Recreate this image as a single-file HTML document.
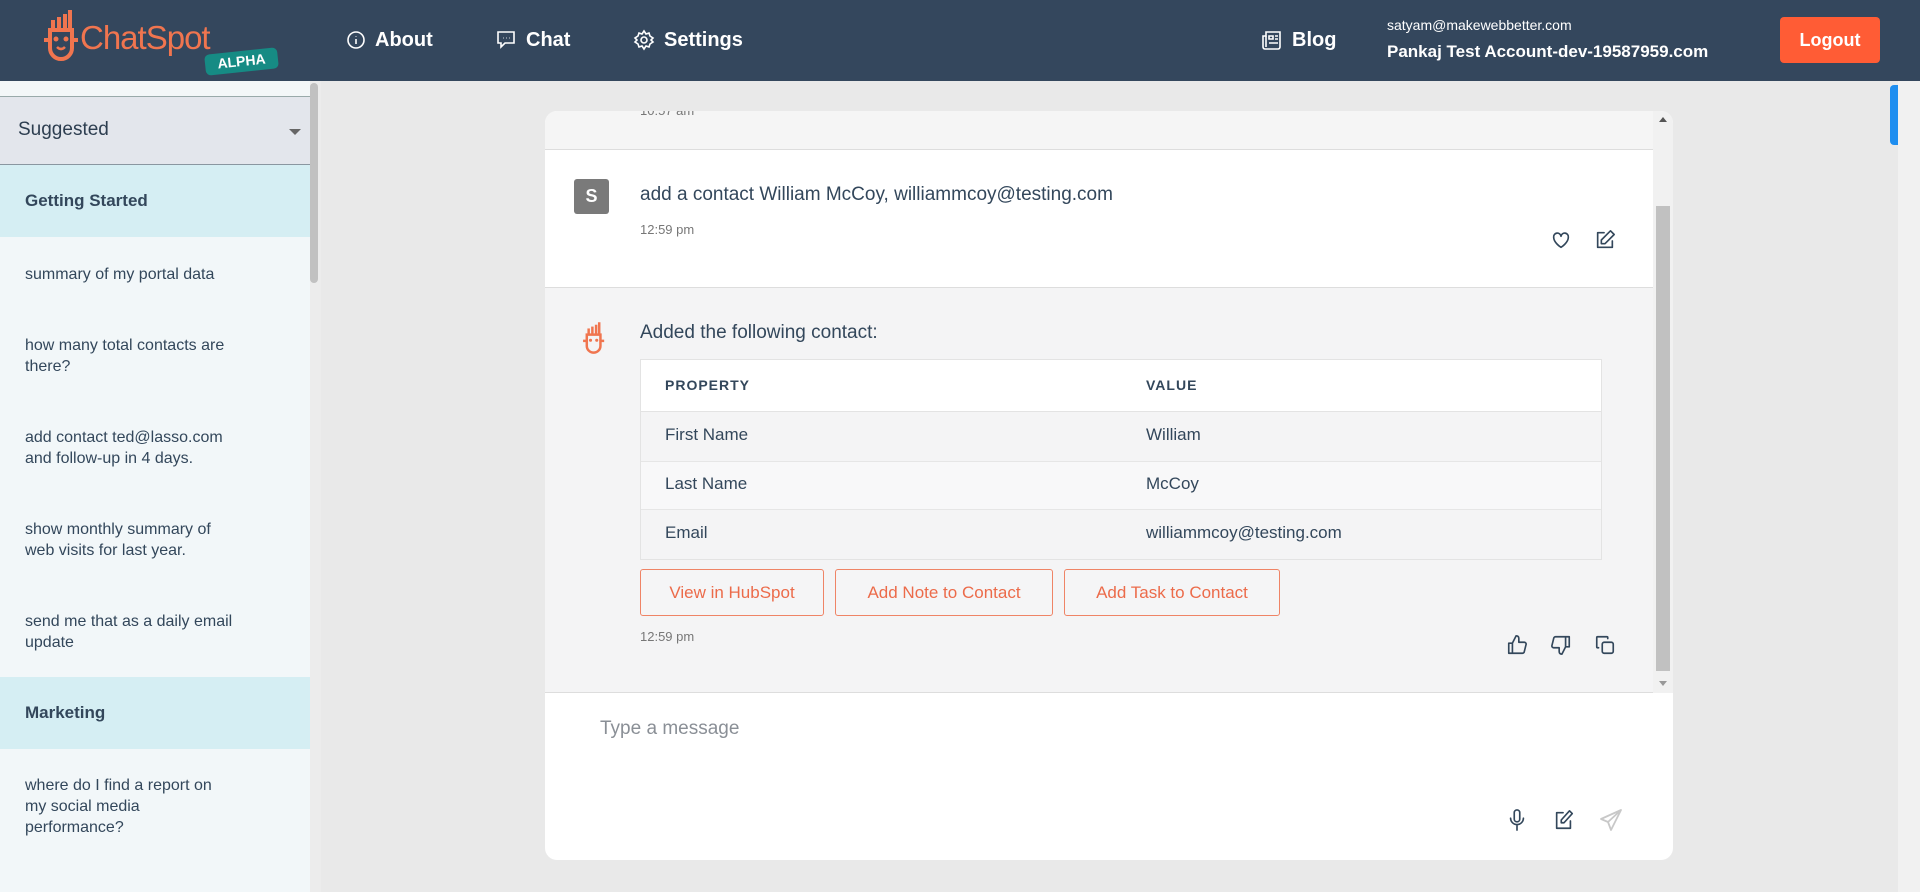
<!DOCTYPE html>
<html><head><meta charset="utf-8">
<style>
*{box-sizing:border-box;margin:0;padding:0}
body{width:1920px;height:892px;overflow:hidden;background:#e9e9e9;font-family:"Liberation Sans",sans-serif;color:#33475b;position:relative}
.hdr{position:absolute;left:0;top:0;width:1920px;height:81px;background:#34475d}
.abs{position:absolute}
.nav{position:absolute;top:27px;color:#fff;font-size:20px;font-weight:bold;display:flex;align-items:center;gap:9px;line-height:26px}
.side{position:absolute;left:0;top:81px;width:321px;height:811px;background:#f2f7f9;overflow:hidden}
.item{position:absolute;left:25px;font-size:16px;line-height:21px;color:#33475b;width:280px;white-space:nowrap}
.sec{position:absolute;left:0;width:310px;background:#d5eef3;font-weight:bold;font-size:17px;padding-left:25px;display:flex;align-items:center;color:#33475b}
.card{position:absolute;left:545px;top:111px;width:1128px;height:749px;background:#fff;border-radius:12px;overflow:hidden}
.cell{position:absolute;font-size:17px;color:#33475b}
.btn{position:absolute;top:569px;height:47px;border:1.5px solid #ef8466;border-radius:3px;color:#ec6b4a;font-size:17px;display:flex;align-items:center;justify-content:center;background:#f5f5f6}
svg.i{position:absolute;fill:none;stroke:#33475b;stroke-width:1.8;stroke-linecap:round;stroke-linejoin:round}
</style></head><body>
<div class="hdr">
  <svg class="abs" style="left:40px;top:8px" width="40" height="58" viewBox="0 0 40 58"><g fill="none" stroke="#f0754f" stroke-width="4"><path d="M10 22 h22 v18 a11 11 0 0 1 -22 0 z"/><path d="M4 32h6M32 32h6"/></g><g fill="#f0754f"><rect x="11" y="12" width="4" height="10"/><rect x="17" y="9" width="4" height="13"/><rect x="23" y="6" width="4" height="16"/><rect x="28" y="2" width="4" height="20"/><circle cx="16" cy="31" r="2.5"/><circle cx="26" cy="31" r="2.5"/></g><path d="M17 39 q4 4 8 0" stroke="#f0754f" stroke-width="2.5" fill="none"/></svg>
  <div class="abs" style="left:80px;top:19px;color:#f0754f;font-size:33px;letter-spacing:-1px">ChatSpot</div>
  <div class="abs" style="left:205px;top:51px;width:73px;height:21px;background:#168b84;border-radius:5px;transform:rotate(-6deg);color:#fff;font-weight:bold;font-size:14px;text-align:center;line-height:21px">ALPHA</div>
  <div class="nav" style="left:346px"><svg width="20" height="20" viewBox="0 0 20 20" fill="none" stroke="#fff" stroke-width="1.6"><circle cx="10" cy="10" r="8"/><path d="M10 9v5M10 6v.5"/></svg>About</div>
  <div class="nav" style="left:495px"><svg width="22" height="22" viewBox="0 0 22 22" fill="none" stroke="#fff" stroke-width="1.6"><path d="M3 3h16v11H10l-4 4v-4H3z"/><path d="M8 9h.5M11 9h.5M14 9h.5"/></svg>Chat</div>
  <div class="nav" style="left:633px"><svg width="22" height="22" viewBox="0 0 22 22" fill="none" stroke="#fff" stroke-width="1.6"><circle cx="11" cy="11" r="3"/><path d="M11 2l2 3 3-1 1 3 3 2-2 2 2 2-3 2-1 3-3-1-2 3-2-3-3 1-1-3-3-2 2-2-2-2 3-2 1-3 3 1z"/></svg>Settings</div>
  <div class="nav" style="left:1261px"><svg width="22" height="22" viewBox="0 0 22 22" fill="none" stroke="#fff" stroke-width="1.6"><path d="M5 3h14v15a2 2 0 0 1-2 2H4a2 2 0 0 1-2-2V7h3z"/><path d="M5 7v11M8 7h4v3H8zM14 7h3M14 10h3M8 14h9"/></svg>Blog</div>
  <div class="abs" style="left:1387px;top:17px;color:#fff;font-size:14px">satyam@makewebbetter.com</div>
  <div class="abs" style="left:1387px;top:42px;color:#fff;font-size:17px;font-weight:bold">Pankaj Test Account-dev-19587959.com</div>
  <div class="abs" style="left:1780px;top:17px;width:100px;height:46px;background:#ff5c35;border-radius:4px;color:#fff;font-size:18px;font-weight:bold;text-align:center;line-height:46px">Logout</div>
</div>

<div class="side">
  <div class="abs" style="left:0;top:0;width:310px;height:16px;background:#f3f7f8;border-bottom:1px solid #9aa"></div>
  <div class="abs" style="left:0;top:16px;width:310px;height:68px;background:#e3e6ec;border-bottom:1px solid #8a96a0"></div>
  <div class="abs" style="left:18px;top:38px;font-size:19px;color:#2d3e50">Suggested</div>
  <div class="abs" style="left:289px;top:48px;width:0;height:0;border-left:6px solid transparent;border-right:6px solid transparent;border-top:6px solid #666"></div>
  <div class="sec" style="top:84px;height:72px">Getting Started</div>
  <div class="item" style="top:183px">summary of my portal data</div>
  <div class="item" style="top:254px">how many total contacts are<br>there?</div>
  <div class="item" style="top:346px">add contact ted@lasso.com<br>and follow-up in 4 days.</div>
  <div class="item" style="top:438px">show monthly summary of<br>web visits for last year.</div>
  <div class="item" style="top:530px">send me that as a daily email<br>update</div>
  <div class="sec" style="top:596px;height:72px">Marketing</div>
  <div class="item" style="top:694px">where do I find a report on<br>my social media<br>performance?</div>
  <div class="abs" style="left:310px;top:0;width:11px;height:811px;background:#ececec"></div>
  <div class="abs" style="left:310px;top:2px;width:8px;height:200px;background:#c1c1c1;border-radius:4px"></div>
</div>

<div class="abs" style="left:1898px;top:81px;width:22px;height:811px;background:#f1f1f1"></div>
<div class="abs" style="left:1890px;top:85px;width:8px;height:60px;background:#1e8ef0;border-radius:4px 0 0 4px"></div>

<div class="card">
  <div class="abs" style="left:0;top:0;width:1108px;height:39px;background:#f5f5f5;border-bottom:1px solid #ddd"></div>
  <div class="abs" style="left:95px;top:-8px;font-size:13px;color:#777">10:57 am</div>
  <div class="abs" style="left:0;top:39px;width:1108px;height:138px;background:#fff;border-bottom:1px solid #ddd"></div>
  <div class="abs" style="left:29px;top:68px;width:35px;height:35px;background:#7a7a7a;border-radius:3px;color:#fff;font-weight:bold;font-size:18px;text-align:center;line-height:35px">S</div>
  <div class="abs" style="left:95px;top:73px;font-size:19px;color:#33475b">add a contact William McCoy, williammcoy@testing.com</div>
  <div class="abs" style="left:95px;top:111px;font-size:13px;color:#777">12:59 pm</div>
  <svg class="i" style="left:1005px;top:118px" width="22" height="22" viewBox="0 0 24 24"><path d="M12 20s-8-5-8-11a4 4 0 0 1 8-1 4 4 0 0 1 8 1c0 6-8 11-8 11z"/></svg>
  <svg class="i" style="left:1049px;top:118px" width="22" height="22" viewBox="0 0 24 24"><path d="M11 4H4v16h16v-7"/><path d="M18 2l4 4-10 10H8v-4z"/></svg>

  <div class="abs" style="left:0;top:177px;width:1108px;height:405px;background:#f4f4f5;border-bottom:1px solid #ddd"></div>
  <svg class="abs" style="left:35px;top:210px" width="26" height="36" viewBox="0 0 40 58"><g fill="none" stroke="#f0754f" stroke-width="4"><path d="M10 22 h22 v18 a11 11 0 0 1 -22 0 z"/><path d="M4 32h6M32 32h6"/></g><g fill="#f0754f"><rect x="11" y="12" width="4" height="10"/><rect x="17" y="9" width="4" height="13"/><rect x="23" y="6" width="4" height="16"/><rect x="28" y="2" width="4" height="20"/><circle cx="16" cy="31" r="2.5"/><circle cx="26" cy="31" r="2.5"/></g></svg>
  <div class="abs" style="left:95px;top:211px;font-size:19px;color:#33475b">Added the following contact:</div>
  <div class="abs" style="left:95px;top:248px;width:962px;height:201px;border:1px solid #e3e3e3;background:#f4f4f5"></div>
  <div class="abs" style="left:96px;top:249px;width:960px;height:52px;background:#fff;border-bottom:1px solid #e3e3e3"></div>
  <div class="cell" style="left:120px;top:266px;font-size:14px;font-weight:bold;letter-spacing:1px;color:#33475b">PROPERTY</div>
  <div class="cell" style="left:601px;top:266px;font-size:14px;font-weight:bold;letter-spacing:1px;color:#33475b">VALUE</div>
  <div class="abs" style="left:96px;top:350px;width:960px;height:49px;background:#f8f8f9;border-top:1px solid #e6e6e6;border-bottom:1px solid #e6e6e6"></div>
  <div class="cell" style="left:120px;top:314px">First Name</div><div class="cell" style="left:601px;top:314px">William</div>
  <div class="cell" style="left:120px;top:363px">Last Name</div><div class="cell" style="left:601px;top:363px">McCoy</div>
  <div class="cell" style="left:120px;top:412px">Email</div><div class="cell" style="left:601px;top:412px">williammcoy@testing.com</div>
  <div class="btn" style="left:95px;width:184px;top:458px">View in HubSpot</div>
  <div class="btn" style="left:290px;width:218px;top:458px">Add Note to Contact</div>
  <div class="btn" style="left:519px;width:216px;top:458px">Add Task to Contact</div>
  <div class="abs" style="left:95px;top:518px;font-size:13px;color:#777">12:59 pm</div>
  <svg class="i" style="left:961px;top:523px" width="22" height="22" viewBox="0 0 24 24"><path d="M7 10v11H3V10zM7 10l4-8c2 0 3 1 3 3v4h6a2 2 0 0 1 2 2l-2 8a2 2 0 0 1-2 2H7"/></svg>
  <svg class="i" style="left:1005px;top:523px" width="22" height="22" viewBox="0 0 24 24"><path d="M17 14V3h4v11zM17 14l-4 8c-2 0-3-1-3-3v-4H4a2 2 0 0 1-2-2l2-8a2 2 0 0 1 2-2h11"/></svg>
  <svg class="i" style="left:1049px;top:523px" width="22" height="22" viewBox="0 0 24 24"><rect x="9" y="9" width="12" height="12" rx="2"/><path d="M5 15H4a1 1 0 0 1-1-1V4a1 1 0 0 1 1-1h10a1 1 0 0 1 1 1v1"/></svg>

  <div class="abs" style="left:1108px;top:0;width:20px;height:582px;background:#f1f1f1"></div>
  <div class="abs" style="left:1114px;top:6px;width:0;height:0;border-left:4px solid transparent;border-right:4px solid transparent;border-bottom:5px solid #555"></div>
  <div class="abs" style="left:1111px;top:95px;width:14px;height:465px;background:#c1c1c1"></div>
  <div class="abs" style="left:1114px;top:570px;width:0;height:0;border-left:4px solid transparent;border-right:4px solid transparent;border-top:5px solid #999"></div>

  <div class="abs" style="left:55px;top:607px;font-size:19px;color:#8a8f96">Type a message</div>
  <svg class="i" style="left:961px;top:697px" width="22" height="24" viewBox="0 0 24 26"><rect x="9" y="2" width="6" height="13" rx="3"/><path d="M5 11a7 7 0 0 0 14 0M12 18v6"/></svg>
  <svg class="i" style="left:1008px;top:697px" width="22" height="24" viewBox="0 0 24 24"><path d="M11 4H4v17h15v-8"/><path d="M18 2l3 3-9 10H9v-3z"/></svg>
  <svg class="i" style="left:1054px;top:697px;stroke:#c8c8c8" width="24" height="24" viewBox="0 0 24 24"><path d="M22 2L2 11l7 3 3 8zM9 14L22 2"/></svg>
</div>
</body></html>
